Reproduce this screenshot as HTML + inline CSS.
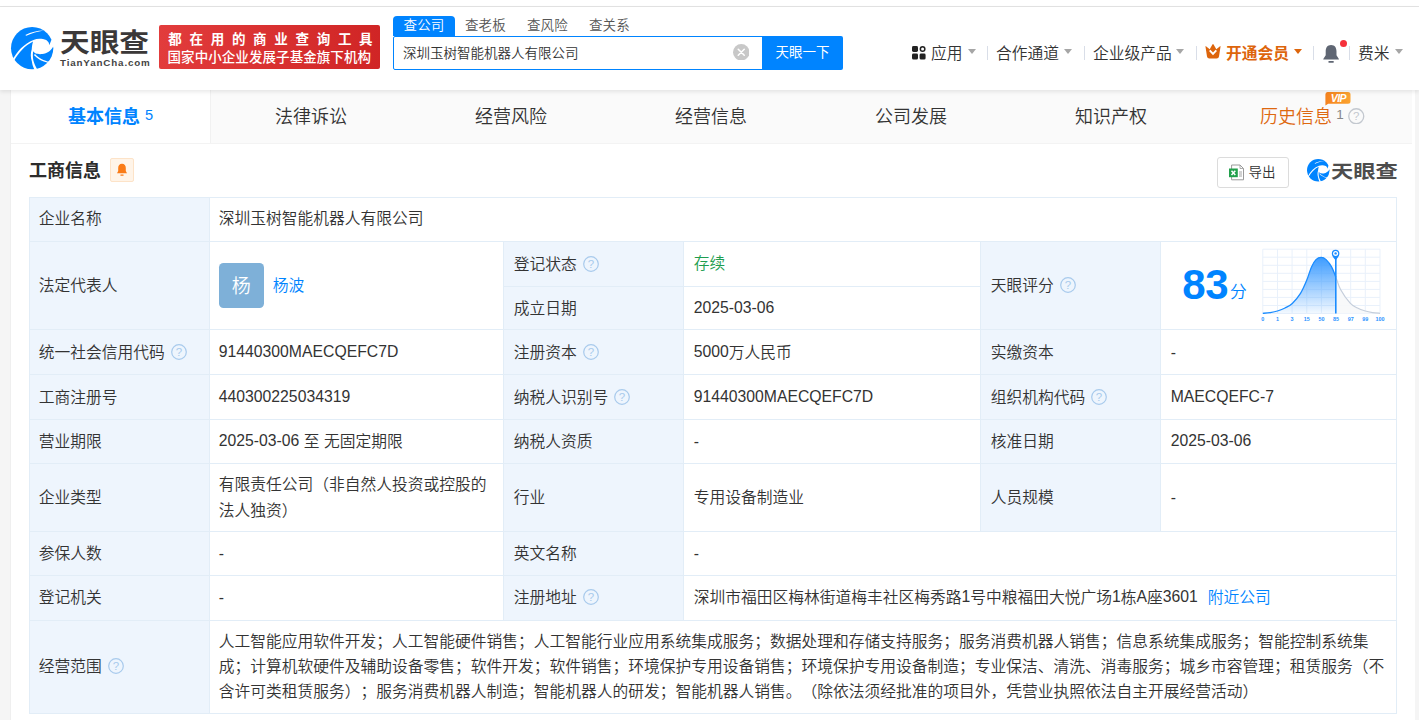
<!DOCTYPE html>
<html lang="zh-CN">
<head>
<meta charset="utf-8">
<title>深圳玉树智能机器人有限公司 - 天眼查</title>
<style>
*{box-sizing:border-box;margin:0;padding:0}
html,body{width:1419px;height:720px;overflow:hidden;background:#f5f5f5}
body{position:relative;font-family:"Liberation Sans","Noto Sans CJK SC",sans-serif;color:#333;font-size:16px;font-weight:350}
.abs{position:absolute;white-space:nowrap}
/* header */
#topline{position:absolute;left:0;top:0;width:1419px;height:7px;background:#fff;border-bottom:1px solid #e3e3e3}
#header{position:absolute;left:0;top:7px;width:1419px;height:83px;background:#fff;box-shadow:0 2px 4px rgba(0,0,0,.09);z-index:5}
#banner{position:absolute;left:159px;top:18px;width:221px;height:44px;border-radius:2px;background:linear-gradient(90deg,#e23c3c,#d02525);color:#fff;text-align:center;font-weight:500}
#banner .l1{position:absolute;left:9.3px;top:6px;width:215px;font-size:13.5px;line-height:18px;letter-spacing:7.7px;font-weight:700;text-align:left;white-space:nowrap}
#banner .l2{position:absolute;left:8.5px;top:24px;width:215px;font-size:13.5px;line-height:18px;letter-spacing:0.07px;font-weight:500;text-align:left;white-space:nowrap}
.stab{position:absolute;top:9px;height:20px;line-height:20px;font-size:13.5px;color:#555;white-space:nowrap;letter-spacing:0.1px}
#stab1{left:393px;width:62px;background:#0084ff;color:#fff;text-align:center;border-radius:4px 4px 0 0}
#sbox{position:absolute;left:393px;top:29px;width:370px;height:34px;border:1px solid #0084ff;border-radius:2px 0 0 2px;background:#fff}
#sbox .q{position:absolute;left:9px;top:1px;line-height:32px;font-size:13.5px;color:#333;white-space:nowrap}
#sclear{position:absolute;left:732.5px;top:36.7px;width:16.5px;height:16.5px}
#sbtn{position:absolute;left:762px;top:29px;width:81px;height:34px;background:#0084ff;color:#fff;border-radius:0 2px 2px 0;font-size:13.5px;line-height:33px;text-align:center;font-weight:400}
.nav{position:absolute;top:36.5px;font-size:15.75px;line-height:20px;color:#333;white-space:nowrap}
.caret{position:absolute;top:42px;width:0;height:0;border-left:4px solid transparent;border-right:4px solid transparent;border-top:5px solid #a6a6a6}
.sep{position:absolute;top:39px;width:1px;height:14px;background:#d9dee8}
/* tabs */
#tabs{position:absolute;left:11px;top:90px;width:1401px;height:54px;background:#fafafa;border-bottom:1px solid #f3f3f3}
#tabactive{position:absolute;left:11px;top:90px;width:200px;height:53px;background:#fff;border-right:1px solid #f1f1f1}
.tab{position:absolute;top:105px;font-size:18px;line-height:24px;color:#333;white-space:nowrap}
#content{position:absolute;left:11px;top:144px;width:1404px;height:577px;background:#fff}
#rstrip{position:absolute;left:1412px;top:90px;width:3px;height:60px;background:#fff}
/* table */
table{position:absolute;left:29px;top:197px;width:1367px;border-collapse:collapse;table-layout:fixed;font-size:15.75px}
td{border:1px solid #e2edf7;padding:0 4px 0 8.8px;white-space:nowrap;text-spacing-trim:space-all;vertical-align:middle;line-height:25.3px;color:#333;overflow:hidden}
tr.up td{padding-bottom:1px}
tr.dn td{padding-top:1px}
tr.dn td[rowspan]{padding-top:0}
td.l{background:#eef5fd;color:#333}
td:nth-child(n+3){padding-left:9.700px}
tr.c2 td{padding-left:9.700px}
.n{position:relative;top:-1px}
.q{display:inline-block;width:16px;height:16px;vertical-align:-2.500px;margin-left:1.500px}
a{color:#0084ff;text-decoration:none}
</style>
</head>
<body>
<div id="topline"></div>
<div id="header">
  <!-- logo -->
  <svg class="abs" style="left:11px;top:19.700px;overflow:visible" width="42.300" height="42.300" viewBox="0 0 42 42"><circle cx="21" cy="21" r="21" fill="#0084ff"/><path fill="#fff" d="M14.200,7.900 C20,5 26,3.600 32.600,3.500 C26,4.600 21,6.200 15.200,8.700 Z"/><path fill="#fff" d="M1.500,32.500 C6,24 13,16.500 22.300,12.800 C26,11.300 31,11.300 35,13 C37,14.500 38,16 38,18.200 L40.300,12.300 L44,12 L44,19.500 L41.800,19.600 C39.500,23.500 36,26.300 31,26.900 C28,27.200 25.500,26.800 23.900,26.100 L22,24 C21.300,28 21.800,33 23.100,36.100 C24,38.500 25,40.300 26.200,42.500 L23.600,43 C22,40 21.200,37.500 20.800,34.600 C19.300,30 19.300,26 20.600,22 C20.800,19 21.200,16.500 21.900,14.300 C13.800,18.300 7.900,24.800 3,33.400 Z"/><path fill="#fff" d="M23.900,26.900 C26,29.500 30,32.300 36.900,34.500 L39,33.500 L38.500,37 L36.500,35.400 C31,34.300 26.500,31.500 22.700,27.700 Z"/></svg>
  <div class="abs" id="lgt" style="left:59.5px;top:17.5px;font-size:26.5px;line-height:36px;font-weight:700;color:#3b3838;letter-spacing:0px;transform-origin:0 0;transform:scaleX(1.12)">天眼查</div>
  <div class="abs" id="lgs" style="left:60px;top:50px;font-size:9.8px;line-height:12px;font-weight:700;color:#444;letter-spacing:0.85px">TianYanCha.com</div>
  <div id="banner"><div class="l1">都在用的商业查询工具</div><div class="l2">国家中小企业发展子基金旗下机构</div></div>
  <!-- search -->
  <div class="stab" id="stab1">查公司</div>
  <div class="stab" style="left:465px">查老板</div>
  <div class="stab" style="left:527px">查风险</div>
  <div class="stab" style="left:589px">查关系</div>
  <div id="sbox"><div class="q" style="width:auto;height:auto;margin:0">深圳玉树智能机器人有限公司</div></div>
  <svg id="sclear" viewBox="0 0 17 17"><circle cx="8.5" cy="8.5" r="8.5" fill="#c8c8c8"/><path d="M5.4 5.4 L11.600 11.600 M11.600 5.4 L5.4 11.600" stroke="#fff" stroke-width="1.600" stroke-linecap="round"/></svg>
  <div id="sbtn">天眼一下</div>
  <!-- nav -->
  <svg class="abs" style="left:912px;top:39.200px" width="13.800" height="13.400" viewBox="0 0 13.800 13.400"><rect x="0" y="0" width="6" height="6" rx="1.500" fill="#222"/><rect x="0" y="7.400" width="6" height="6" rx="1.500" fill="#222"/><rect x="7.600" y="7.400" width="6" height="6" rx="1.500" fill="#222"/><circle cx="10.600" cy="3" r="2.250" fill="none" stroke="#222" stroke-width="1.500"/></svg>
  <div class="nav" style="left:931px">应用</div><div class="caret" style="left:967.5px"></div>
  <div class="sep" style="left:987px"></div>
  <div class="nav" style="left:996px">合作通道</div><div class="caret" style="left:1064px"></div>
  <div class="sep" style="left:1084px"></div>
  <div class="nav" style="left:1093px">企业级产品</div><div class="caret" style="left:1176px"></div>
  <div class="sep" style="left:1196px"></div>
  <svg class="abs" style="left:1205px;top:37.400px" width="16" height="14.800" viewBox="0 0 16 14.800"><path d="M0.500,2.700 Q0.400,1.700 1.300,2.400 L4.700,5.300 L7.400,0.500 Q8,-0.300 8.600,0.500 L11.300,5.300 L14.700,2.400 Q15.600,1.700 15.500,2.700 L14,12.400 Q13.700,14.500 11.600,14.500 H4.400 Q2.300,14.500 2,12.400 Z" fill="#dd650c"/><path d="M4.700,6.400 L8,9.900 L11.300,6.400" fill="none" stroke="#fff" stroke-width="1.900" stroke-linejoin="miter"/></svg>
  <div class="nav" style="left:1226px;color:#dd650c;font-weight:700">开通会员</div><div class="caret" style="left:1294px;border-top-color:#dd650c"></div>
  <div class="sep" style="left:1313px"></div>
  <svg class="abs" style="left:1323.400px;top:37.800px" width="16.200" height="18" viewBox="0 0 16.200 18"><path d="M8.100,0 C4.300,0 2.700,2.900 2.700,6.300 V10.300 L0.300,14 Q0.100,14.600 0.800,14.600 H15.400 Q16.100,14.600 15.900,14 L13.500,10.300 V6.300 C13.500,2.900 11.900,0 8.100,0Z" fill="#5f6673"/><rect x="5.300" y="16.100" width="5.600" height="1.600" rx=".8" fill="#5f6673"/></svg>
  <div class="abs" style="left:1339.500px;top:32.500px;width:7.700px;height:7.700px;border-radius:50%;background:#f5313b"></div>
  <div class="sep" style="left:1349px"></div>
  <div class="nav" style="left:1358px">费米</div><div class="caret" style="left:1395.3px"></div>
</div>

<div class="abs" style="left:10px;top:90px;width:1px;height:630px;background:#efefef"></div>
<div id="tabs"></div>
<div id="rstrip"></div>
<div id="tabactive"></div>
<div id="content"></div>
<div class="tab" style="left:68px;color:#0084ff;font-weight:700">基本信息</div>
<div class="abs" style="left:145px;top:107px;font-size:14.6px;line-height:16px;color:#0084ff;font-weight:400">5</div>
<div class="tab" style="left:275px">法律诉讼</div>
<div class="tab" style="left:475px">经营风险</div>
<div class="tab" style="left:675px">经营信息</div>
<div class="tab" style="left:875px">公司发展</div>
<div class="tab" style="left:1075px">知识产权</div>
<div class="tab" style="left:1260px;color:#de6810">历史信息</div>
<div class="abs" style="left:1336.3px;top:107.3px;font-size:13.5px;line-height:16px;color:#888;font-weight:400">1</div>
<svg class="abs" style="left:1348px;top:107.800px" width="16.500" height="16.500" viewBox="0 0 16.500 16.500"><circle cx="8.250" cy="8.250" r="7.500" fill="none" stroke="#c3c8cf" stroke-width="1.300"/><text x="8.250" y="12.400" font-size="11.500" text-anchor="middle" fill="#c3c8cf" font-family="Liberation Sans, sans-serif">?</text></svg>
<!-- VIP badge -->
<svg class="abs" style="left:1324.500px;top:92px" width="26" height="14" viewBox="0 0 26 14"><defs><linearGradient id="vg" x1="0" y1="0" x2="1" y2="0"><stop offset="0" stop-color="#f5821e"/><stop offset="1" stop-color="#fba330"/></linearGradient></defs><path d="M2.500 0 H23 Q25.500 0 25.500 2.500 V9.300 Q25.500 11.800 23 11.800 H3.200 L0.400 13.600 V2.500 Q0.400 0 2.500 0Z" fill="url(#vg)"/><text x="13.300" y="9.700" font-size="10.500" font-weight="700" font-style="italic" text-anchor="middle" fill="#fff" font-family="Liberation Sans, sans-serif" letter-spacing="-0.600">VIP</text></svg>

<!-- section title -->
<div class="abs" style="left:29px;top:158px;font-size:18px;line-height:26px;font-weight:700;color:#2c2c2c">工商信息</div>
<div class="abs" style="left:110px;top:158px;width:24px;height:24px;border:1px solid #fde3c8;background:#fff4e8;border-radius:2px"></div>
<svg class="abs" style="left:116px;top:163px" width="12" height="14" viewBox="0 0 12 14"><path d="M6 0.800 C3.500 0.800 2.200 2.800 2.200 5 L2.200 8 L1 10.300 L11 10.300 L9.800 8 L9.800 5 C9.800 2.800 8.500 0.800 6 0.800Z" fill="#fa7b16"/><rect x="4.300" y="11.400" width="3.400" height="1.300" rx=".6" fill="#fa7b16"/></svg>

<!-- export + watermark logo -->
<div class="abs" style="left:1217px;top:157px;width:72px;height:31px;border:1px solid #dcdcdc;border-radius:3px;background:#fff"></div>
<svg class="abs" style="left:1229px;top:163.500px" width="16" height="17" viewBox="0 0 16 17"><path d="M2.600,1 H11 L14.500,4.500 V15.800 H2.600 Z" fill="#fff" stroke="#9a9a9a" stroke-width="1"/><path d="M11,1 V4.500 H14.500" fill="none" stroke="#9a9a9a" stroke-width="0.800"/><path d="M10,8 h3 M10,10 h3 M10,12 h3" stroke="#9a9a9a" stroke-width="0.900"/><rect x="0" y="4.500" width="8.800" height="8.700" fill="#21a04b"/><path d="M2.500,6.700 L6.300,11 M6.300,6.700 L2.500,11" stroke="#fff" stroke-width="1.500"/></svg>
<div class="abs" style="left:1248.500px;top:163.500px;font-size:13.5px;line-height:18px;color:#333">导出</div>
<svg class="abs" style="left:1306.800px;top:159.200px;overflow:visible" width="22.500" height="22.500" viewBox="0 0 42 42"><circle cx="21" cy="21" r="21" fill="#0084ff"/><path fill="#fff" d="M14.200,7.900 C20,5 26,3.600 32.600,3.500 C26,4.600 21,6.200 15.200,8.700 Z"/><path fill="#fff" d="M1.500,32.500 C6,24 13,16.500 22.300,12.800 C26,11.300 31,11.300 35,13 C37,14.500 38,16 38,18.200 L40.300,12.300 L44,12 L44,19.500 L41.800,19.600 C39.500,23.500 36,26.300 31,26.900 C28,27.200 25.500,26.800 23.900,26.100 L22,24 C21.300,28 21.800,33 23.100,36.100 C24,38.500 25,40.300 26.200,42.500 L23.600,43 C22,40 21.200,37.500 20.800,34.600 C19.300,30 19.300,26 20.600,22 C20.800,19 21.200,16.500 21.900,14.300 C13.800,18.300 7.900,24.800 3,33.400 Z"/><path fill="#fff" d="M23.900,26.900 C26,29.500 30,32.300 36.900,34.500 L39,33.500 L38.500,37 L36.500,35.400 C31,34.300 26.500,31.500 22.700,27.700 Z"/></svg>
<div class="abs" id="wmt" style="left:1330.600px;top:158.200px;font-size:18.700px;line-height:28px;font-weight:700;color:#4d4d4d;transform-origin:0 0;transform:scaleX(1.190)">天眼查</div>

<table>
<colgroup><col style="width:180px"><col style="width:294px"><col style="width:180px"><col style="width:297px"><col style="width:180px"><col style="width:236px"></colgroup>
<tr class="up" style="height:44px"><td class="l">企业名称</td><td colspan="5">深圳玉树智能机器人有限公司</td></tr>
<tr class="dn" style="height:45px"><td class="l" rowspan="2">法定代表人</td><td rowspan="2"><span style="display:inline-block;width:45px;height:45px;line-height:47px;border-radius:4.5px;background:#7eb0d8;color:#fff;text-align:center;font-size:19px;vertical-align:middle;overflow:hidden">杨</span><a style="margin-left:9px;vertical-align:middle">杨波</a></td><td class="l">登记状态 <svg class="q" viewBox="0 0 16 16"><circle cx="8" cy="8" r="7.300" fill="none" stroke="#a8caec" stroke-width="1.200"/><text x="8" y="12.200" font-size="11.500" text-anchor="middle" fill="#a8caec" font-family="Liberation Sans, sans-serif">?</text></svg></td><td style="color:#1e9d4f"><span class="n">存续</span></td><td class="l" rowspan="2">天眼评分 <svg class="q" viewBox="0 0 16 16"><circle cx="8" cy="8" r="7.300" fill="none" stroke="#a8caec" stroke-width="1.200"/><text x="8" y="12.200" font-size="11.500" text-anchor="middle" fill="#a8caec" font-family="Liberation Sans, sans-serif">?</text></svg></td><td rowspan="2"></td></tr>
<tr class="c2 dn" style="height:43px"><td class="l">成立日期</td><td><span class="n">2025-03-06</span></td></tr>
<tr class="dn" style="height:45px"><td class="l">统一社会信用代码 <svg class="q" viewBox="0 0 16 16"><circle cx="8" cy="8" r="7.300" fill="none" stroke="#a8caec" stroke-width="1.200"/><text x="8" y="12.200" font-size="11.500" text-anchor="middle" fill="#a8caec" font-family="Liberation Sans, sans-serif">?</text></svg></td><td><span class="n">91440300MAECQEFC7D</span></td><td class="l">注册资本 <svg class="q" viewBox="0 0 16 16"><circle cx="8" cy="8" r="7.300" fill="none" stroke="#a8caec" stroke-width="1.200"/><text x="8" y="12.200" font-size="11.500" text-anchor="middle" fill="#a8caec" font-family="Liberation Sans, sans-serif">?</text></svg></td><td><span class="n">5000</span>万人民币</td><td class="l">实缴资本</td><td>-</td></tr>
<tr class="dn" style="height:45px"><td class="l">工商注册号</td><td><span class="n">440300225034319</span></td><td class="l">纳税人识别号 <svg class="q" viewBox="0 0 16 16"><circle cx="8" cy="8" r="7.300" fill="none" stroke="#a8caec" stroke-width="1.200"/><text x="8" y="12.200" font-size="11.500" text-anchor="middle" fill="#a8caec" font-family="Liberation Sans, sans-serif">?</text></svg></td><td><span class="n">91440300MAECQEFC7D</span></td><td class="l">组织机构代码 <svg class="q" viewBox="0 0 16 16"><circle cx="8" cy="8" r="7.300" fill="none" stroke="#a8caec" stroke-width="1.200"/><text x="8" y="12.200" font-size="11.500" text-anchor="middle" fill="#a8caec" font-family="Liberation Sans, sans-serif">?</text></svg></td><td><span class="n">MAECQEFC-7</span></td></tr>
<tr style="height:44px"><td class="l">营业期限</td><td><span class="n">2025-03-06</span> 至 无固定期限</td><td class="l">纳税人资质</td><td>-</td><td class="l">核准日期</td><td><span class="n">2025-03-06</span></td></tr>
<tr style="height:68px"><td class="l">企业类型</td><td>有限责任公司（非自然人投资或控股的<br>法人独资）</td><td class="l">行业</td><td>专用设备制造业</td><td class="l">人员规模</td><td>-</td></tr>
<tr style="height:44px"><td class="l">参保人数</td><td>-</td><td class="l">英文名称</td><td colspan="3">-</td></tr>
<tr class="up" style="height:45px"><td class="l">登记机关</td><td>-</td><td class="l">注册地址 <svg class="q" viewBox="0 0 16 16"><circle cx="8" cy="8" r="7.300" fill="none" stroke="#a8caec" stroke-width="1.200"/><text x="8" y="12.200" font-size="11.500" text-anchor="middle" fill="#a8caec" font-family="Liberation Sans, sans-serif">?</text></svg></td><td colspan="3">深圳市福田区梅林街道梅丰社区梅秀路<span class="n">1</span>号中粮福田大悦广场<span class="n">1</span>栋<span class="n">A</span>座<span class="n">3601</span><a style="margin-left:10px">附近公司</a></td></tr>
<tr class="up" style="height:93px"><td class="l">经营范围 <svg class="q" viewBox="0 0 16 16"><circle cx="8" cy="8" r="7.300" fill="none" stroke="#a8caec" stroke-width="1.200"/><text x="8" y="12.200" font-size="11.500" text-anchor="middle" fill="#a8caec" font-family="Liberation Sans, sans-serif">?</text></svg></td><td colspan="5">人工智能应用软件开发；人工智能硬件销售；人工智能行业应用系统集成服务；数据处理和存储支持服务；服务消费机器人销售；信息系统集成服务；智能控制系统集<br>成；计算机软硬件及辅助设备零售；软件开发；软件销售；环境保护专用设备销售；环境保护专用设备制造；专业保洁、清洗、消毒服务；城乡市容管理；租赁服务（不<br>含许可类租赁服务）；服务消费机器人制造；智能机器人的研发；智能机器人销售。（除依法须经批准的项目外，凭营业执照依法自主开展经营活动）</td></tr>
</table>
<!--CHART--><svg class="abs" style="left:1160px;top:241px" width="236" height="88" viewBox="1160 241 236 88">
<defs><linearGradient id="cg" x1="0" y1="0" x2="0" y2="1"><stop offset="0" stop-color="#3d9cff"/><stop offset="1" stop-color="#3d9cff" stop-opacity="0.06"/></linearGradient></defs>
<path d="M1262.8,249.2V313.5M1277.5,249.2V313.5M1292.1,249.2V313.5M1306.8,249.2V313.5M1321.4,249.2V313.5M1336.0,249.2V313.5M1350.7,249.2V313.5M1365.3,249.2V313.5M1380.0,249.2V313.5M1262.8,249.2H1380M1262.8,257.2H1380M1262.8,265.3H1380M1262.8,273.3H1380M1262.8,281.4H1380M1262.8,289.4H1380M1262.8,297.4H1380M1262.8,305.5H1380M1262.8,313.5H1380" fill="none" stroke="#e9f1fb" stroke-width="1"/>
<path d="M1335.8,277.0 C1337.3,280.8 1338.3,285.4 1340.7,289.8 C1343.1,294.2 1347.6,300.4 1350.4,303.4 C1353.2,306.4 1355.0,306.7 1357.5,308.0 C1360.0,309.3 1362.8,310.2 1365.3,311.0 C1367.8,311.8 1370.0,312.2 1372.5,312.6 C1375.0,313.0 1378.8,313.2 1380.0,313.3 L1380,313.5 L1335.8,313.5 Z" fill="#f7f8fa" opacity="0.9"/>
<path d="M1335.8,277.0 C1337.3,280.8 1338.3,285.4 1340.7,289.8 C1343.1,294.2 1347.6,300.4 1350.4,303.4 C1353.2,306.4 1355.0,306.7 1357.5,308.0 C1360.0,309.3 1362.8,310.2 1365.3,311.0 C1367.8,311.8 1370.0,312.2 1372.5,312.6 C1375.0,313.0 1378.8,313.2 1380.0,313.3" fill="none" stroke="#c5cedb" stroke-width="1.2"/>
<path d="M1262.8,313.3 C1264.0,313.2 1267.6,313.0 1270.0,312.6 C1272.4,312.2 1274.9,311.8 1277.4,311.0 C1279.9,310.2 1282.5,309.3 1285.0,308.0 C1287.5,306.7 1289.7,305.8 1292.3,303.4 C1294.9,301.0 1298.1,297.2 1300.5,293.4 C1302.9,289.6 1304.8,285.0 1306.6,280.6 C1308.4,276.2 1309.9,270.4 1311.5,266.9 C1313.1,263.4 1314.4,261.2 1316.0,259.6 C1317.6,258.0 1319.5,257.3 1321.2,257.3 C1322.9,257.3 1324.4,258.0 1326.1,259.6 C1327.8,261.2 1330.0,264.0 1331.6,266.9 C1333.2,269.8 1334.3,273.2 1335.8,277.0 L1335.8,313.5 L1262.8,313.5 Z" fill="url(#cg)"/>
<path d="M1262.8,313.3 C1264.0,313.2 1267.6,313.0 1270.0,312.6 C1272.4,312.2 1274.9,311.8 1277.4,311.0 C1279.9,310.2 1282.5,309.3 1285.0,308.0 C1287.5,306.7 1289.7,305.8 1292.3,303.4 C1294.9,301.0 1298.1,297.2 1300.5,293.4 C1302.9,289.6 1304.8,285.0 1306.6,280.6 C1308.4,276.2 1309.9,270.4 1311.5,266.9 C1313.1,263.4 1314.4,261.2 1316.0,259.6 C1317.6,258.0 1319.5,257.3 1321.2,257.3 C1322.9,257.3 1324.4,258.0 1326.1,259.6 C1327.8,261.2 1330.0,264.0 1331.6,266.9 C1333.2,269.8 1334.3,273.2 1335.8,277.0" fill="none" stroke="#1a8cff" stroke-width="1.3"/>
<path d="M1335.8,257 V313.5" stroke="#1a8cff" stroke-width="1.6"/>
<path d="M1335.6,260.3 C1333.8,258 1331.8,256.2 1331.8,253.5 A3.8,3.8 0 1 1 1339.4,253.5 C1339.4,256.2 1337.4,258 1335.6,260.3Z" fill="#1a8cff"/>
<circle cx="1335.6" cy="253.4" r="2.5" fill="#fff"/><circle cx="1335.6" cy="253.4" r="1.2" fill="#1a8cff"/>
<g font-family="Liberation Sans, sans-serif" font-size="5.4" font-weight="700" fill="#2b93ff"><text x="1262.8" y="321.4" text-anchor="middle">0</text><text x="1277.5" y="321.4" text-anchor="middle">1</text><text x="1292.1" y="321.4" text-anchor="middle">3</text><text x="1306.8" y="321.4" text-anchor="middle">15</text><text x="1321.4" y="321.4" text-anchor="middle">50</text><text x="1336.0" y="321.4" text-anchor="middle">85</text><text x="1350.7" y="321.4" text-anchor="middle">97</text><text x="1365.3" y="321.4" text-anchor="middle">99</text><text x="1380.0" y="321.4" text-anchor="middle">100</text></g>
<text x="1182.3" y="299.2" font-family="Liberation Sans, sans-serif" font-size="42" font-weight="700" fill="#0084ff" letter-spacing="-0.5">83</text>
<text x="1230" y="298.3" font-family="Liberation Sans, Noto Sans CJK SC, sans-serif" font-size="16.8" fill="#0084ff">分</text>
</svg><!--/CHART-->
</body>
</html>
